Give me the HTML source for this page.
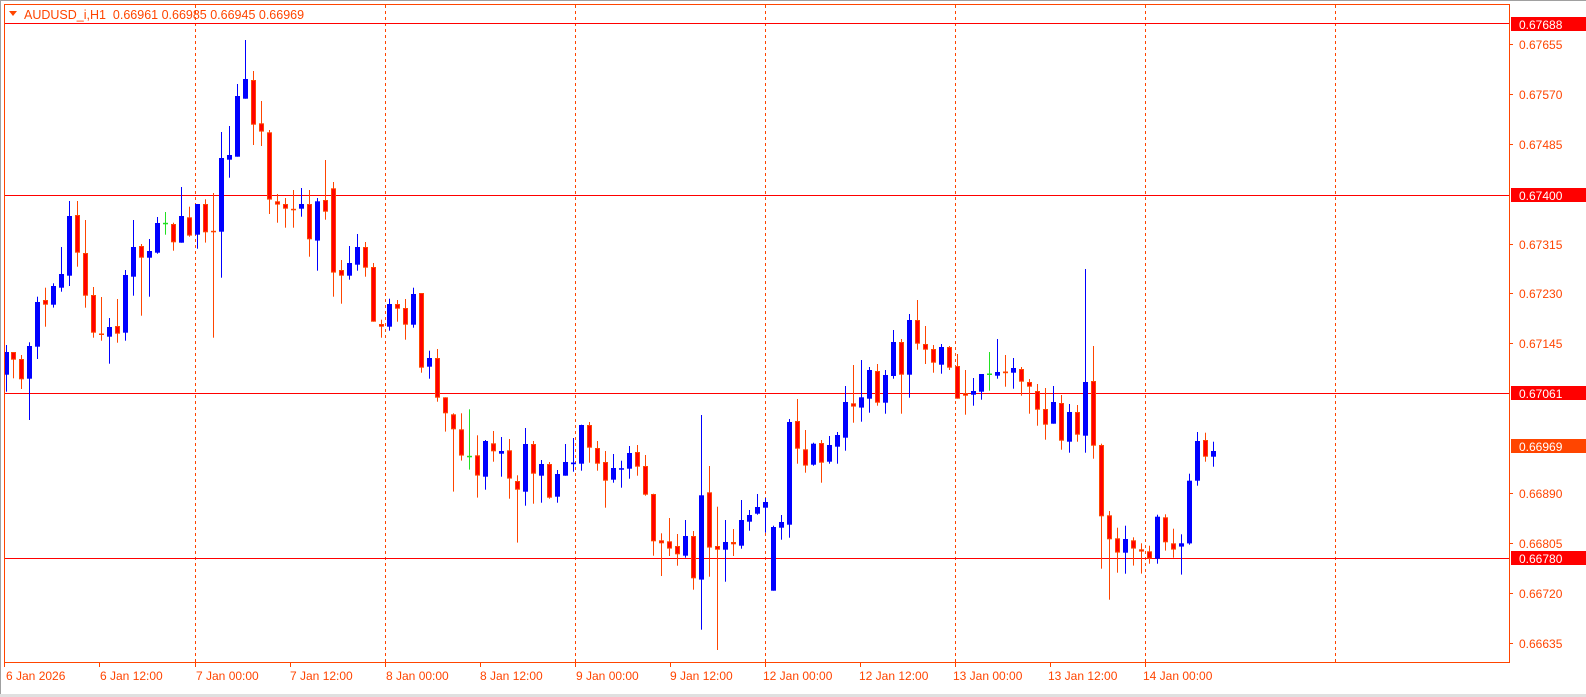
<!DOCTYPE html>
<html><head><meta charset="utf-8"><style>
html,body{margin:0;padding:0;background:#fff;}
body{width:1586px;height:697px;overflow:hidden;position:relative;font-family:"Liberation Sans",sans-serif;}
svg{position:absolute;left:0;top:0;}
svg text{font-family:"Liberation Sans",sans-serif;font-size:12px;}
</style></head><body>
<svg id="s" width="1586" height="697" xmlns="http://www.w3.org/2000/svg">
<rect x="0" y="0" width="1586" height="697" fill="#fff"/>
<rect x="0" y="0" width="1586" height="1" fill="#a0a0a0"/>
<rect x="0" y="0" width="1" height="697" fill="#a0a0a0"/>
<rect x="0" y="694" width="1586" height="3" fill="#e0e0e0"/>
<g stroke="#ff4500" stroke-width="1" stroke-dasharray="3,3">
<line x1="195.5" y1="5" x2="195.5" y2="662"/>
<line x1="385.5" y1="5" x2="385.5" y2="662"/>
<line x1="575.5" y1="5" x2="575.5" y2="662"/>
<line x1="765.5" y1="5" x2="765.5" y2="662"/>
<line x1="955.5" y1="5" x2="955.5" y2="662"/>
<line x1="1145.5" y1="5" x2="1145.5" y2="662"/>
<line x1="1335.5" y1="5" x2="1335.5" y2="662"/>
</g>
<g stroke="#ff0000" stroke-width="1">
<line x1="4" y1="23.5" x2="1509" y2="23.5"/>
<line x1="4" y1="195.5" x2="1509" y2="195.5"/>
<line x1="4" y1="393.5" x2="1509" y2="393.5"/>
<line x1="4" y1="558.5" x2="1509" y2="558.5"/>
</g>
<g id="c"></g>
<rect x="4.5" y="4.5" width="1505" height="658" fill="none" stroke="#ff4500"/>
<g stroke="#ff4500">
<line x1="1509" y1="44.5" x2="1513" y2="44.5"/><line x1="1509" y1="94.5" x2="1513" y2="94.5"/>
<line x1="1509" y1="144.5" x2="1513" y2="144.5"/><line x1="1509" y1="244.5" x2="1513" y2="244.5"/>
<line x1="1509" y1="293.5" x2="1513" y2="293.5"/><line x1="1509" y1="343.5" x2="1513" y2="343.5"/>
<line x1="1509" y1="493.5" x2="1513" y2="493.5"/><line x1="1509" y1="543.5" x2="1513" y2="543.5"/>
<line x1="1509" y1="593.5" x2="1513" y2="593.5"/><line x1="1509" y1="643.5" x2="1513" y2="643.5"/>
<line x1="4.5" y1="662" x2="4.5" y2="667"/><line x1="99.5" y1="662" x2="99.5" y2="667"/>
<line x1="195.5" y1="662" x2="195.5" y2="667"/><line x1="290.5" y1="662" x2="290.5" y2="667"/>
<line x1="385.5" y1="662" x2="385.5" y2="667"/><line x1="480.5" y1="662" x2="480.5" y2="667"/>
<line x1="575.5" y1="662" x2="575.5" y2="667"/><line x1="670.5" y1="662" x2="670.5" y2="667"/>
<line x1="765.5" y1="662" x2="765.5" y2="667"/><line x1="860.5" y1="662" x2="860.5" y2="667"/>
<line x1="955.5" y1="662" x2="955.5" y2="667"/><line x1="1050.5" y1="662" x2="1050.5" y2="667"/>
<line x1="1145.5" y1="662" x2="1145.5" y2="667"/>
</g>
<rect x="1511" y="17" width="75" height="14" fill="#ff0000"/>
<rect x="1511" y="188" width="75" height="14" fill="#ff0000"/>
<rect x="1511" y="386" width="75" height="14" fill="#ff0000"/>
<rect x="1511" y="439" width="75" height="14" fill="#ff4500"/>
<rect x="1511" y="551" width="75" height="14" fill="#ff0000"/>
<g fill="#ff4500">
<text x="1519" y="49">0.67655</text><text x="1519" y="99">0.67570</text>
<text x="1519" y="149">0.67485</text><text x="1519" y="249">0.67315</text>
<text x="1519" y="298">0.67230</text><text x="1519" y="348">0.67145</text>
<text x="1519" y="498">0.66890</text><text x="1519" y="548">0.66805</text>
<text x="1519" y="598">0.66720</text><text x="1519" y="648">0.66635</text>
</g>
<g fill="#fff">
<text x="1519" y="29">0.67688</text><text x="1519" y="200">0.67400</text>
<text x="1519" y="398">0.67061</text><text x="1519" y="451">0.66969</text>
<text x="1519" y="563">0.66780</text>
</g>
<g fill="#ff4500">
<text x="6" y="680">6 Jan 2026</text><text x="100" y="680">6 Jan 12:00</text>
<text x="196" y="680">7 Jan 00:00</text><text x="290" y="680">7 Jan 12:00</text>
<text x="386" y="680">8 Jan 00:00</text><text x="480" y="680">8 Jan 12:00</text>
<text x="576" y="680">9 Jan 00:00</text><text x="670" y="680">9 Jan 12:00</text>
<text x="763" y="680">12 Jan 00:00</text><text x="859" y="680">12 Jan 12:00</text>
<text x="953" y="680">13 Jan 00:00</text><text x="1048" y="680">13 Jan 12:00</text>
<text x="1143" y="680">14 Jan 00:00</text>
<polygon points="9,11 17,11 13,16"/>
<text x="24" y="19" xml:space="preserve" style="white-space:pre;font-size:12.5px">AUDUSD_i,H1  0.66961 0.66985 0.66945 0.66969</text>
</g>
</svg>
<script>
var Z=[
[0,30,[[18,945,966,1034,1085,'b'],[40,966,966,989,1045,'r'],[64,975,987,1048,1077,'r'],[88,937,948,1046,1170,'b'],[112,800,816,950,987,'b'],[136,773,810,824,890,'r'],[160,760,768,824,833,'b'],[184,651,732,773,785,'b'],[208,513,558,737,768,'b'],[232,513,555,668,710,'r'],[256,570,669,797,833,'r'],[280,771,795,908,923,'r'],[304,801,912,914,932,'r'],[328,864,891,920,1001,'b'],[352,807,888,911,938,'r'],[376,720,735,908,932,'b'],[400,570,651,740,797,'b'],[424,642,648,683,857,'r'],[448,627,663,683,800,'b'],[472,561,579,668,671,'b'],[496,546,580,580,614,'g'],[520,578,582,637,662,'r'],[544,471,558,638,638,'b'],[568,530,562,617,620,'r'],[592,522,522,614,656,'b'],[616,508,522,607,638,'r'],[640,489,604,607,923,'r'],[664,306,384,605,743,'b']]],
[220,30,[[28,288,375,389,443,'b'],[52,162,198,380,380,'b'],[76,30,147,206,206,'b'],[100,123,150,284,345,'r'],[124,213,280,305,348,'r'],[148,300,307,509,552,'r'],[172,492,514,524,578,'r'],[196,504,522,536,593,'r'],[220,480,538,541,593,'r'],[244,474,522,536,560,'b'],[268,480,522,628,680,'r'],[292,504,514,632,722,'b'],[316,390,510,545,569,'r'],[340,456,475,728,800,'r'],[364,690,720,737,821,'r'],[388,648,699,737,749,'b'],[412,612,651,704,722,'b'],[436,636,651,713,740,'r'],[460,699,711,875,875,'r'],[484,869,882,890,923,'r'],[508,806,822,890,902,'b'],[532,810,822,836,875,'r'],[556,807,834,884,929,'r'],[580,773,792,884,893,'b'],[604,789,789,1013,1028,'r'],[628,962,984,1010,1046,'b'],[652,957,984,1103,1115,'r']]],
[400,330,[[136,202,202,250,305,'r'],[160,250,253,298,485,'r'],[184,250,298,377,392,'r'],[208,238,379,380,419,'g'],[232,316,376,437,503,'r'],[256,330,333,440,479,'b'],[280,303,340,364,395,'r'],[304,321,363,371,440,'b'],[328,327,361,446,506,'r'],[352,436,453,479,638,'r'],[376,294,342,485,527,'b'],[400,333,342,431,521,'r'],[424,390,402,437,518,'b'],[448,396,402,503,506,'r'],[472,420,432,500,518,'b'],[496,342,396,437,437,'b'],[520,324,399,404,425,'b'],[544,284,285,401,422,'b'],[568,276,285,353,398,'r'],[592,333,354,401,422,'r'],[616,363,396,452,533,'r'],[640,372,414,449,458,'b'],[664,392,416,419,473,'b'],[688,348,369,416,446,'b'],[712,345,366,410,437,'r'],[736,375,408,494,497,'r'],[760,491,492,634,677,'r']]],
[640,380,[[64,460,481,490,588,'r'],[88,414,484,506,528,'r'],[112,462,498,523,557,'r'],[136,420,468,527,533,'b'],[160,453,468,595,629,'r'],[184,105,346,599,749,'b'],[208,258,337,503,590,'r'],[232,380,498,509,810,'r'],[256,420,486,509,605,'b'],[280,447,486,493,528,'r'],[304,360,420,497,506,'b'],[328,390,405,425,452,'b'],[352,342,381,401,404,'b'],[376,354,366,383,458,'b'],[400,437,441,632,632,'b'],[424,405,426,443,479,'b'],[448,117,126,434,473,'b'],[472,57,123,206,251,'r'],[496,150,208,257,278,'r'],[520,188,191,254,257,'b'],[544,180,189,248,308,'r'],[568,168,195,245,251,'b'],[592,156,165,200,251,'b']]],
[800,290,[[136,288,336,443,482,'b'],[160,225,340,350,398,'r'],[184,210,322,353,395,'b'],[208,231,240,326,368,'b'],[232,222,243,338,347,'r'],[256,240,255,338,371,'b'],[280,120,156,258,266,'b'],[304,147,156,254,371,'r'],[328,72,90,254,323,'b'],[352,30,90,161,179,'r'],[376,108,162,179,222,'r'],[400,165,177,218,248,'r'],[424,162,171,224,251,'b'],[448,168,171,233,240,'r'],[472,192,228,326,326,'r'],[496,240,309,317,374,'r'],[520,264,303,314,347,'b'],[544,252,252,305,329,'b'],[568,186,252,254,302,'g'],[592,147,246,257,266,'b'],[616,195,246,251,290,'r'],[640,204,234,248,296,'b'],[664,231,237,275,317,'r'],[688,267,276,290,371,'r'],[712,282,303,359,407,'r'],[736,294,357,404,449,'r'],[760,288,336,401,401,'b']]],
[1020,260,[[124,405,429,542,569,'r'],[148,432,456,545,578,'b'],[172,435,456,524,545,'r'],[196,27,366,527,578,'b'],[220,258,363,557,596,'r'],[244,551,555,769,926,'r'],[268,753,766,838,1019,'r'],[292,803,835,878,938,'r'],[316,797,837,878,941,'b'],[340,832,841,866,917,'r'],[364,850,868,875,941,'r'],[388,857,874,896,911,'r'],[412,764,770,896,911,'b'],[436,763,772,847,872,'r'],[460,806,850,869,893,'r'],[484,823,850,860,944,'b'],[508,641,662,850,854,'b'],[532,516,543,662,677,'b'],[556,518,540,590,605,'r'],[580,545,573,590,620,'b']]]
];
var h='';
Z.forEach(function(z){var ox=z[0],oy=z[1];z[2].forEach(function(c){
var x=Math.round(ox+c[0]/3),hi=oy+c[1]/3,bt=oy+c[2]/3,bb=oy+c[3]/3,lo=oy+c[4]/3,k=c[5];
var col=k=='b'?'#0000ff':(k=='g'?'#22e022':'#ff4500');
h+='<rect x="'+x+'" y="'+hi.toFixed(1)+'" width="1" height="'+(lo-hi).toFixed(1)+'" fill="'+col+'"/>';
var bh=bb-bt;
if(bh<2){h+='<rect x="'+(x-2)+'" y="'+(bt-0.5).toFixed(1)+'" width="5" height="'+Math.max(1.5,bh).toFixed(1)+'" fill="'+(k=='r'?'#ff4500':col)+'"/>';}
else if(k=='b'){h+='<rect x="'+(x-2)+'" y="'+bt.toFixed(1)+'" width="5" height="'+bh.toFixed(1)+'" fill="#0000ff"/>';}
else{h+='<rect x="'+(x-2)+'" y="'+bt.toFixed(1)+'" width="5" height="'+bh.toFixed(1)+'" fill="#ff4500"/><rect x="'+(x-1)+'" y="'+(bt+1).toFixed(1)+'" width="3" height="'+(bh-2).toFixed(1)+'" fill="#ff0000"/>';}
});});
document.getElementById('c').innerHTML=h;
</script>
</body></html>
